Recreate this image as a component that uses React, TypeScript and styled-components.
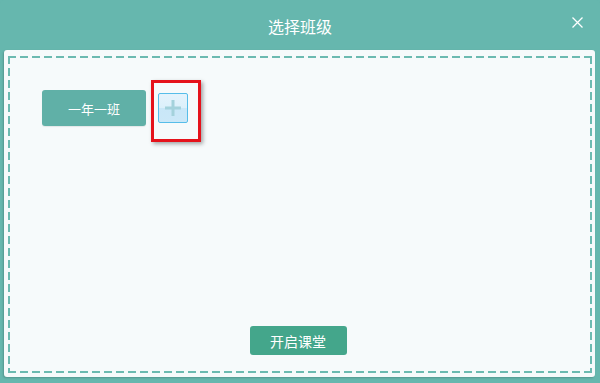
import React from 'react';
import styled, { createGlobalStyle } from 'styled-components';

const GlobalStyle = createGlobalStyle`
  html, body {
    margin: 0;
    padding: 0;
    background: #66b7ae;
  }
  body {
    font-family: "Noto Sans CJK SC", "Noto Sans", sans-serif;
  }
`;

const Window = styled.div`
  width: 600px;
  height: 383px;
  display: flex;
  flex-direction: column;
  background: #66b7ae;
  border-radius: 4px 4px 0 0;
  box-sizing: border-box;
`;

const Header = styled.div`
  height: 50px;
  display: grid;
  grid-template-columns: 1fr auto 1fr;
  align-items: center;
  flex-shrink: 0;
`;

const Title = styled.h1`
  grid-column: 2;
  margin: 0;
  font-size: 16px;
  font-weight: 400;
  color: #ffffff;
  line-height: 1;
  padding-top: 2px;
`;

const CloseButton = styled.button`
  grid-column: 3;
  justify-self: end;
  margin-right: 17px;
  margin-bottom: 6px;
  width: 12px;
  height: 12px;
  padding: 0;
  border: none;
  background: none;
  cursor: pointer;
  display: flex;
  align-items: center;
  justify-content: center;
`;

const Panel = styled.div`
  flex: 1;
  margin: 0 5px 6px 4px;
  padding: 6px 3px 4px 4px;
  background: #f6fafb;
  border-radius: 3px;
  box-shadow: -1px 1px 2px rgba(0, 0, 0, 0.18);
  display: flex;
  box-sizing: border-box;
`;

const DashedArea = styled.div`
  flex: 1;
  display: flex;
  flex-direction: column;
  padding: 34px 20px 18px 34px;
  background:
    repeating-linear-gradient(90deg, #6cbab1 0 8px, transparent 8px 12px) top left / 100% 2px no-repeat,
    repeating-linear-gradient(90deg, #6cbab1 0 8px, transparent 8px 12px) bottom left / 100% 2px no-repeat,
    repeating-linear-gradient(180deg, #6cbab1 0 8px, transparent 8px 12px) top left / 2px 100% no-repeat,
    repeating-linear-gradient(180deg, #6cbab1 0 8px, transparent 8px 12px) top right / 2px 100% no-repeat;
`;

const ClassRow = styled.div`
  display: flex;
  align-items: center;
  gap: 12px;
`;

const ClassButton = styled.button`
  width: 104px;
  height: 36px;
  border: none;
  border-radius: 3px;
  background: #60b0a7;
  color: #ffffff;
  font-family: inherit;
  font-size: 13px;
  cursor: pointer;
  box-shadow: 0 1px 1px rgba(0, 0, 0, 0.08);
`;

const AddWrap = styled.div`
  position: relative;
  display: flex;
`;

const AddButton = styled.button`
  width: 30px;
  height: 30px;
  padding: 0;
  border: 1px solid #56bde9;
  border-radius: 2px;
  background: linear-gradient(180deg, #e4f3fc 0%, #dcf0fb 50%, #c9e7f8 51%, #cbe8f8 100%);
  cursor: pointer;
  display: flex;
  align-items: center;
  justify-content: center;
`;

const Highlight = styled.div`
  position: absolute;
  left: -7px;
  top: -13px;
  width: 50px;
  height: 62px;
  box-sizing: border-box;
  border: 3px solid #e5121b;
  box-shadow: 2px 2px 4px rgba(0, 0, 0, 0.35);
  pointer-events: none;
`;

const Footer = styled.div`
  margin-top: auto;
  display: flex;
  justify-content: center;
  padding-right: 18px;
`;

const StartButton = styled.button`
  width: 97px;
  height: 29px;
  border: none;
  border-radius: 3px;
  background: #44a68b;
  color: #ffffff;
  font-family: inherit;
  font-size: 14px;
  cursor: pointer;
`;

export default function App() {
  return (
    <>
      <GlobalStyle />
      <Window>
        <Header>
          <Title>选择班级</Title>
          <CloseButton aria-label="关闭">
            <svg width="11" height="11" viewBox="0 0 11 11">
              <path d="M0.5 0.5 L10.5 10.5 M10.5 0.5 L0.5 10.5" stroke="#ffffff" strokeWidth="1.3" />
            </svg>
          </CloseButton>
        </Header>
        <Panel>
          <DashedArea>
            <ClassRow>
              <ClassButton>一年一班</ClassButton>
              <AddWrap>
                <AddButton aria-label="添加班级">
                  <svg width="16" height="16" viewBox="0 0 16 16">
                    <path d="M8 0 V16 M0 8 H16" stroke="#a4d2dc" strokeWidth="3" />
                  </svg>
                </AddButton>
                <Highlight />
              </AddWrap>
            </ClassRow>
            <Footer>
              <StartButton>开启课堂</StartButton>
            </Footer>
          </DashedArea>
        </Panel>
      </Window>
    </>
  );
}
